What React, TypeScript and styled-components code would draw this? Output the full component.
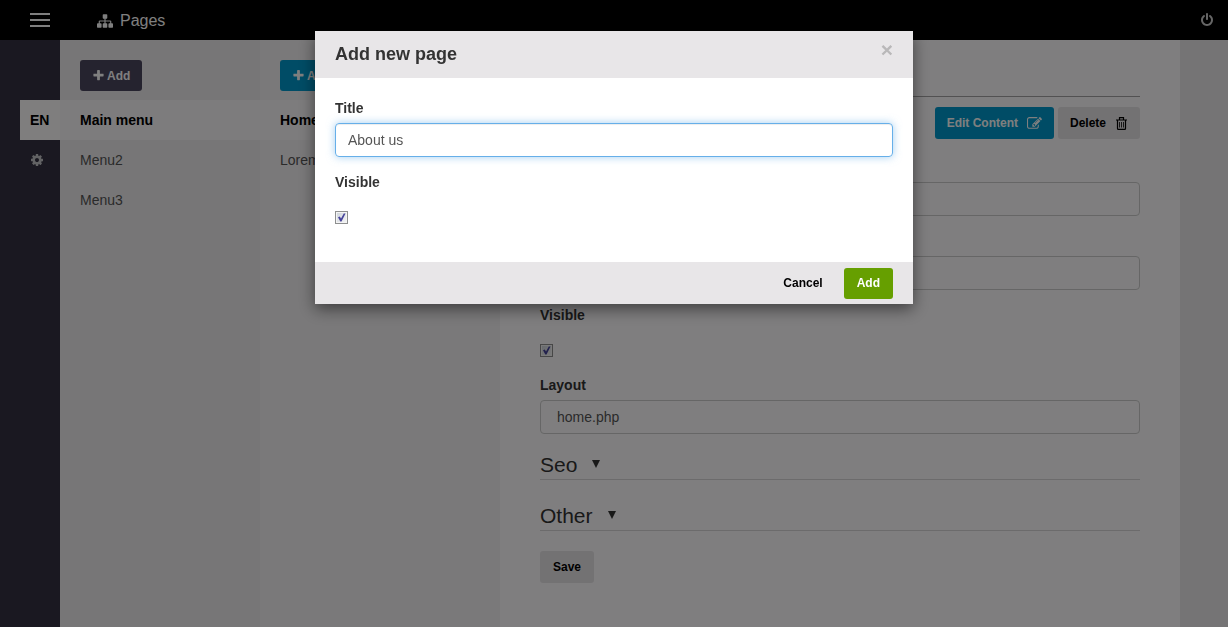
import React from "react";
import styled, { createGlobalStyle, css } from "styled-components";

const GlobalStyle = createGlobalStyle`
  *, *::before, *::after { box-sizing: border-box; }
  body {
    margin: 0;
    font-family: "Liberation Sans", Arial, sans-serif;
    font-size: 14px;
    line-height: 20px;
    color: #333;
    background: #ebe9eb;
  }
  button, input { font-family: inherit; }
  h1, h2, ul { margin: 0; padding: 0; font-weight: normal; }
  ul { list-style: none; }
`;

const Page = styled.div`
  display: flex;
  flex-direction: column;
  min-height: 100vh;
`;

const TopBar = styled.header`
  display: flex;
  align-items: center;
  height: 40px;
  padding: 0 14px 0 30px;
  background: #000;
  color: #fff;
`;

const MenuButton = styled.button`
  display: flex;
  flex-direction: column;
  gap: 4px;
  width: 20px;
  margin-right: 47px;
  padding: 0;
  border: 0;
  background: none;
`;

const MenuBar = styled.span`
  height: 2px;
  background: #fff;
`;

const PageTitle = styled.h1`
  display: flex;
  flex: 1;
  align-items: center;
  gap: 7px;
  padding-top: 1px;
  font-size: 16px;
`;

const IconButton = styled.button`
  display: flex;
  padding: 0;
  border: 0;
  background: none;
  color: #ccc;
`;

const Glyph = styled.svg<{ $size: number }>`
  flex: none;
  width: ${(p) => p.$size}px;
  height: ${(p) => p.$size}px;
  fill: currentColor;
`;

const Columns = styled.div`
  display: flex;
  flex: 1;
`;

const Rail = styled.nav`
  display: flex;
  flex-direction: column;
  align-items: flex-end;
  width: 60px;
  padding-top: 60px;
  background: #343142;
`;

const RailLink = styled.a<{ $active?: boolean }>`
  display: flex;
  align-items: center;
  width: 40px;
  height: 40px;
  padding-left: 10px;
  font-weight: bold;
  text-decoration: none;
  color: ${(p) => (p.$active ? "#000" : "#c4c4c8")};
  background: ${(p) => (p.$active ? "#fffdfd" : "transparent")};
`;

const ListColumn = styled.section<{ $width: number; $tone: string }>`
  flex: none;
  width: ${(p) => p.$width}px;
  padding-top: 20px;
  background: ${(p) => p.$tone};
`;

const ColumnActions = styled.div`
  display: flex;
  padding: 0 20px;
  margin-bottom: 9px;
`;

const ListLink = styled.a<{ $active?: boolean }>`
  display: block;
  padding: 10px 20px;
  color: #555;
  text-decoration: none;
  ${(p) =>
    p.$active &&
    css`
      background: #fbf9fb;
      color: #000;
      font-weight: bold;
    `}
`;

const tones = {
  dark: ["#4b465f", "#fff"],
  blue: ["#0099cc", "#fff"],
  grey: ["#e7e5e7", "#000"],
  green: ["#669f00", "#fff"],
  plain: ["transparent", "#000"],
};

const Button = styled.button<{ $tone: keyof typeof tones; $tall?: boolean; $gap?: number }>`
  display: inline-flex;
  align-items: center;
  gap: ${(p) => p.$gap ?? 0}px;
  height: ${(p) => (p.$tall ? 32 : 31)}px;
  padding: 0 ${(p) => (p.$gap ? 12 : 13)}px;
  border: 0;
  border-radius: 3px;
  background: ${(p) => tones[p.$tone][0]};
  color: ${(p) => tones[p.$tone][1]};
  font-size: 12px;
  font-weight: bold;
  white-space: nowrap;
`;

const Content = styled.main`
  flex: 1;
  min-width: 0;
  margin-right: 48px;
  padding: 0 40px 40px;
  background: #fffdff;
`;

const ContentHead = styled.div`
  height: 57px;
  border-bottom: 1px solid #a5a3a5;
`;

const Actions = styled.div`
  display: flex;
  justify-content: flex-end;
  gap: 4px;
  padding: 10px 0 18px;
`;

const Field = styled.div<{ $unlabelled?: boolean }>`
  margin-bottom: 15px;
  padding-top: ${(p) => (p.$unlabelled ? 25 : 0)}px;
`;

const Label = styled.label`
  display: block;
  margin-bottom: 5px;
  font-weight: bold;
`;

const TextInput = styled.input<{ $focus?: boolean; $indent?: boolean }>`
  display: block;
  width: 100%;
  height: 34px;
  padding: 0 ${(p) => (p.$indent ? 16 : 12)}px;
  border: 1px solid #ccc;
  border-radius: 4px;
  outline: 0;
  background: transparent;
  font-size: 14px;
  color: #555;
  ${(p) =>
    p.$focus &&
    css`
      border-color: #66afe9;
      box-shadow: inset 0 1px 1px rgba(0, 0, 0, 0.075), 0 0 8px rgba(102, 175, 233, 0.6);
    `}
`;

const CheckBox = styled.span`
  display: grid;
  width: 13px;
  height: 13px;
  margin: 19px 0 18px;
  & > * {
    grid-area: 1 / 1;
  }
`;

const CheckInput = styled.input`
  appearance: none;
  width: 13px;
  height: 13px;
  margin: 0;
  border: 1px solid #8e8f8f;
  background: linear-gradient(135deg, #ccd2da, #f6f6f6);
  box-shadow: inset 0 0 0 1px #f4f4f4;
`;

const CheckMark = styled.svg`
  width: 13px;
  height: 13px;
  pointer-events: none;
  fill: #45429a;
`;

const SectionTitle = styled.h2`
  display: flex;
  align-items: center;
  height: 31px;
  margin-bottom: 20px;
  padding-top: 2px;
  border-bottom: 1px solid #d8d6d8;
  font-size: 21px;
`;

const SectionToggle = styled.button`
  display: flex;
  align-items: center;
  gap: 15px;
  padding: 0;
  border: 0;
  background: none;
  font-size: inherit;
  color: inherit;
`;

const Caret = styled.svg`
  width: 8px;
  height: 10px;
`;

const Backdrop = styled.div`
  position: fixed;
  inset: 0;
  display: flex;
  align-items: flex-start;
  justify-content: center;
  padding-top: 31px;
  background: rgba(0, 0, 0, 0.5);
`;

const Dialog = styled.div`
  width: 598px;
  max-width: 100%;
  background: #fff;
  box-shadow: 0 5px 15px rgba(0, 0, 0, 0.5);
`;

const DialogHead = styled.div`
  display: flex;
  align-items: center;
  justify-content: space-between;
  height: 47px;
  padding: 0 20px 2px;
  background: #e8e6e8;
`;

const DialogTitle = styled.h2`
  && {
    font-size: 18px;
    font-weight: bold;
  }
`;

const CloseButton = styled.button`
  padding: 0 0 8px;
  border: 0;
  background: none;
  font-size: 21px;
  font-weight: bold;
  line-height: 20px;
  color: #b9b8b9;
`;

const DialogBody = styled.div`
  padding: 20px;
`;

const DialogFoot = styled.div`
  display: flex;
  align-items: center;
  justify-content: flex-end;
  gap: 8px;
  height: 42px;
  padding: 0 20px;
  background: #e8e6e8;
`;

const paths = {
  sitemap:
    "M1792 1248v320q0 40-28 68t-68 28h-320q-40 0-68-28t-28-68v-320q0-40 28-68t68-28h96v-192h-512v192h96q40 0 68 28t28 68v320q0 40-28 68t-68 28h-320q-40 0-68-28t-28-68v-320q0-40 28-68t68-28h96v-192h-512v192h96q40 0 68 28t28 68v320q0 40-28 68t-68 28h-320q-40 0-68-28t-28-68v-320q0-40 28-68t68-28h96v-192q0-52 38-90t90-38h512v-192h-96q-40 0-68-28t-28-68v-320q0-40 28-68t68-28h320q40 0 68 28t28 68v320q0 40-28 68t-68 28h-96v192h512q52 0 90 38t38 90v192h96q40 0 68 28t28 68z",
  plus: "M1600 736v192q0 40-28 68t-68 28h-416v416q0 40-28 68t-68 28h-192q-40 0-68-28t-28-68v-416h-416q-40 0-68-28t-28-68v-192q0-40 28-68t68-28h416v-416q0-40 28-68t68-28h192q40 0 68 28t28 68v416h416q40 0 68 28t28 68z",
  power:
    "M1664 896q0 156-61 298t-164 245-245 164-298 61-298-61-245-164-164-245-61-298q0-182 80.5-343t226.5-270q43-32 95.5-25t83.5 50q32 42 24.5 94.5t-49.5 84.5q-98 74-151.5 181t-53.5 228q0 104 40.5 198.5t109.5 163.5 163.5 109.5 198.5 40.5 198.5-40.5 163.5-109.5 109.5-163.5 40.5-198.5q0-121-53.5-228t-151.5-181q-42-32-49.5-84.5t24.5-94.5q31-43 84-50t95 25q146 109 226.5 270t80.5 343zm-640-768v640q0 52-38 90t-90 38-90-38-38-90v-640q0-52 38-90t90-38 90 38 38 90z",
  cog: "M1152 896q0-106-75-181t-181-75-181 75-75 181 75 181 181 75 181-75 75-181zm512-109v222q0 12-8 23t-20 13l-185 28q-19 54-39 91 35 50 107 138 10 12 10 25t-9 23q-27 37-99 108t-94 71q-12 0-26-9l-138-108q-44 23-91 38-16 136-29 186-7 28-36 28h-222q-14 0-24.5-8.5t-11.5-21.5l-28-184q-49-16-90-37l-141 107q-10 9-25 9-14 0-25-11-126-114-165-168-7-10-7-23 0-12 8-23 15-21 51-66.5t54-70.5q-27-50-41-99l-183-27q-13-2-21-12.500t-8-23.500v-222q0-12 8-23t19-13l186-28q14-46 39-92-40-57-107-138-10-12-10-24 0-10 9-23 26-36 98.500-107.500t94.500-71.500q13 0 26 10l138 107q44-23 91-38 16-136 29-186 7-28 36-28h222q14 0 24.500 8.500t11.500 21.500l28 184q49 16 90 37l142-107q9-9 24-9 13 0 25 10 129 119 165 170 7 8 7 22 0 12-8 23-15 21-51 66.500t-54 70.500q26 50 41 98l183 28q13 2 21 12.500t8 23.500z",
  edit: "M888 1184l116-116-152-152-116 116v56h96v96h56zm440-720q-16-16-33 1l-350 350q-17 17-1 33t33-1l350-350q17-17 1-33zm80 594v190q0 119-84.5 203.5t-203.5 84.5h-832q-119 0-203.5-84.5t-84.5-203.5v-832q0-119 84.5-203.5t203.5-84.5h832q63 0 117 25 15 7 18 23 3 17-9 29l-49 49q-14 14-32 8-23-6-45-6h-832q-66 0-113 47t-47 113v832q0 66 47 113t113 47h832q66 0 113-47t47-113v-126q0-13 9-22l64-64q15-15 35-7t20 29zm-96-738l288 288-672 672h-288v-288zm444 132l-92 92-288-288 92-92q28-28 68-28t68 28l152 152q28 28 28 68t-28 68z",
};

function Icon({ name, size }: { name: keyof typeof paths; size: number }) {
  return (
    <Glyph $size={size} viewBox="0 0 1792 1792" aria-hidden="true">
      <path d={paths[name]} />
    </Glyph>
  );
}

function TrashIcon() {
  return (
    <Glyph $size={13} viewBox="0 0 13 13" aria-hidden="true">
      <path
        d="M1 3h11M4.500 3V.7h4V3M2.500 3v8.500q0 .9.900.9h6.200q.9 0 .9-.9V3"
        fill="none"
        stroke="currentColor"
        strokeWidth="1.200"
      />
      <path d="M4.500 5v5.500M6.500 5v5.500M8.500 5v5.500" stroke="currentColor" strokeWidth=".8" />
    </Glyph>
  );
}

function Check({ id }: { id: string }) {
  return (
    <CheckBox>
      <CheckInput id={id} type="checkbox" defaultChecked />
      <CheckMark viewBox="0 0 13 13" aria-hidden="true">
        <path d="M3 6.200l1.800-.7 1.200 2L8.800 2.500h1.700L6.500 10.500H5.300z" />
      </CheckMark>
    </CheckBox>
  );
}

function Section({ title }: { title: string }) {
  return (
    <SectionTitle>
      <SectionToggle type="button">
        {title}
        <Caret viewBox="0 0 8 10" aria-hidden="true">
          <path d="M0 0h8L4 8z" fill="currentColor" />
        </Caret>
      </SectionToggle>
    </SectionTitle>
  );
}

function LinkList({ items }: { items: string[] }) {
  return (
    <ul>
      {items.map((item, i) => (
        <li key={item}>
          <ListLink href="#" $active={i === 0}>
            {item}
          </ListLink>
        </li>
      ))}
    </ul>
  );
}

export default function App() {
  return (
    <>
      <GlobalStyle />
      <Page>
        <TopBar>
          <MenuButton type="button" aria-label="Menu">
            <MenuBar />
            <MenuBar />
            <MenuBar />
          </MenuButton>
          <PageTitle>
            <Icon name="sitemap" size={16} />
            Pages
          </PageTitle>
          <IconButton type="button" aria-label="Log out">
            <Icon name="power" size={14} />
          </IconButton>
        </TopBar>
        <Columns>
          <Rail>
            <RailLink href="#" $active>
              EN
            </RailLink>
            <RailLink href="#" aria-label="Settings">
              <Icon name="cog" size={14} />
            </RailLink>
          </Rail>
          <ListColumn $width={200} $tone="#efedef">
            <ColumnActions>
              <Button type="button" $tone="dark" $gap={2}>
                <Icon name="plus" size={13} />
                Add
              </Button>
            </ColumnActions>
            <LinkList items={["Main menu", "Menu2", "Menu3"]} />
          </ListColumn>
          <ListColumn $width={240} $tone="#f5f3f5">
            <ColumnActions>
              <Button type="button" $tone="blue" $gap={2}>
                <Icon name="plus" size={13} />
                Add
              </Button>
            </ColumnActions>
            <LinkList items={["Home", "Lorem"]} />
          </ListColumn>
          <Content>
            <ContentHead />
            <Actions>
              <Button type="button" $tone="blue" $tall $gap={9}>
                Edit Content
                <Icon name="edit" size={15} />
              </Button>
              <Button type="button" $tone="grey" $tall $gap={9}>
                Delete
                <TrashIcon />
              </Button>
            </Actions>
            <Field $unlabelled>
              <TextInput aria-label="Title" />
            </Field>
            <Field $unlabelled>
              <TextInput aria-label="Address" />
            </Field>
            <Field>
              <Label htmlFor="page-visible">Visible</Label>
              <Check id="page-visible" />
            </Field>
            <Field>
              <Label htmlFor="page-layout">Layout</Label>
              <TextInput id="page-layout" defaultValue="home.php" $indent />
            </Field>
            <Section title="Seo" />
            <Section title="Other" />
            <Button type="button" $tone="grey" $tall>
              Save
            </Button>
          </Content>
        </Columns>
      </Page>
      <Backdrop>
        <Dialog role="dialog" aria-modal="true" aria-labelledby="dialog-title">
          <DialogHead>
            <DialogTitle id="dialog-title">Add new page</DialogTitle>
            <CloseButton type="button" aria-label="Close">
              ×
            </CloseButton>
          </DialogHead>
          <DialogBody>
            <Field>
              <Label htmlFor="new-title">Title</Label>
              <TextInput id="new-title" defaultValue="About us" $focus />
            </Field>
            <Field>
              <Label htmlFor="new-visible">Visible</Label>
              <Check id="new-visible" />
            </Field>
          </DialogBody>
          <DialogFoot>
            <Button type="button" $tone="plain">
              Cancel
            </Button>
            <Button type="button" $tone="green">
              Add
            </Button>
          </DialogFoot>
        </Dialog>
      </Backdrop>
    </>
  );
}
